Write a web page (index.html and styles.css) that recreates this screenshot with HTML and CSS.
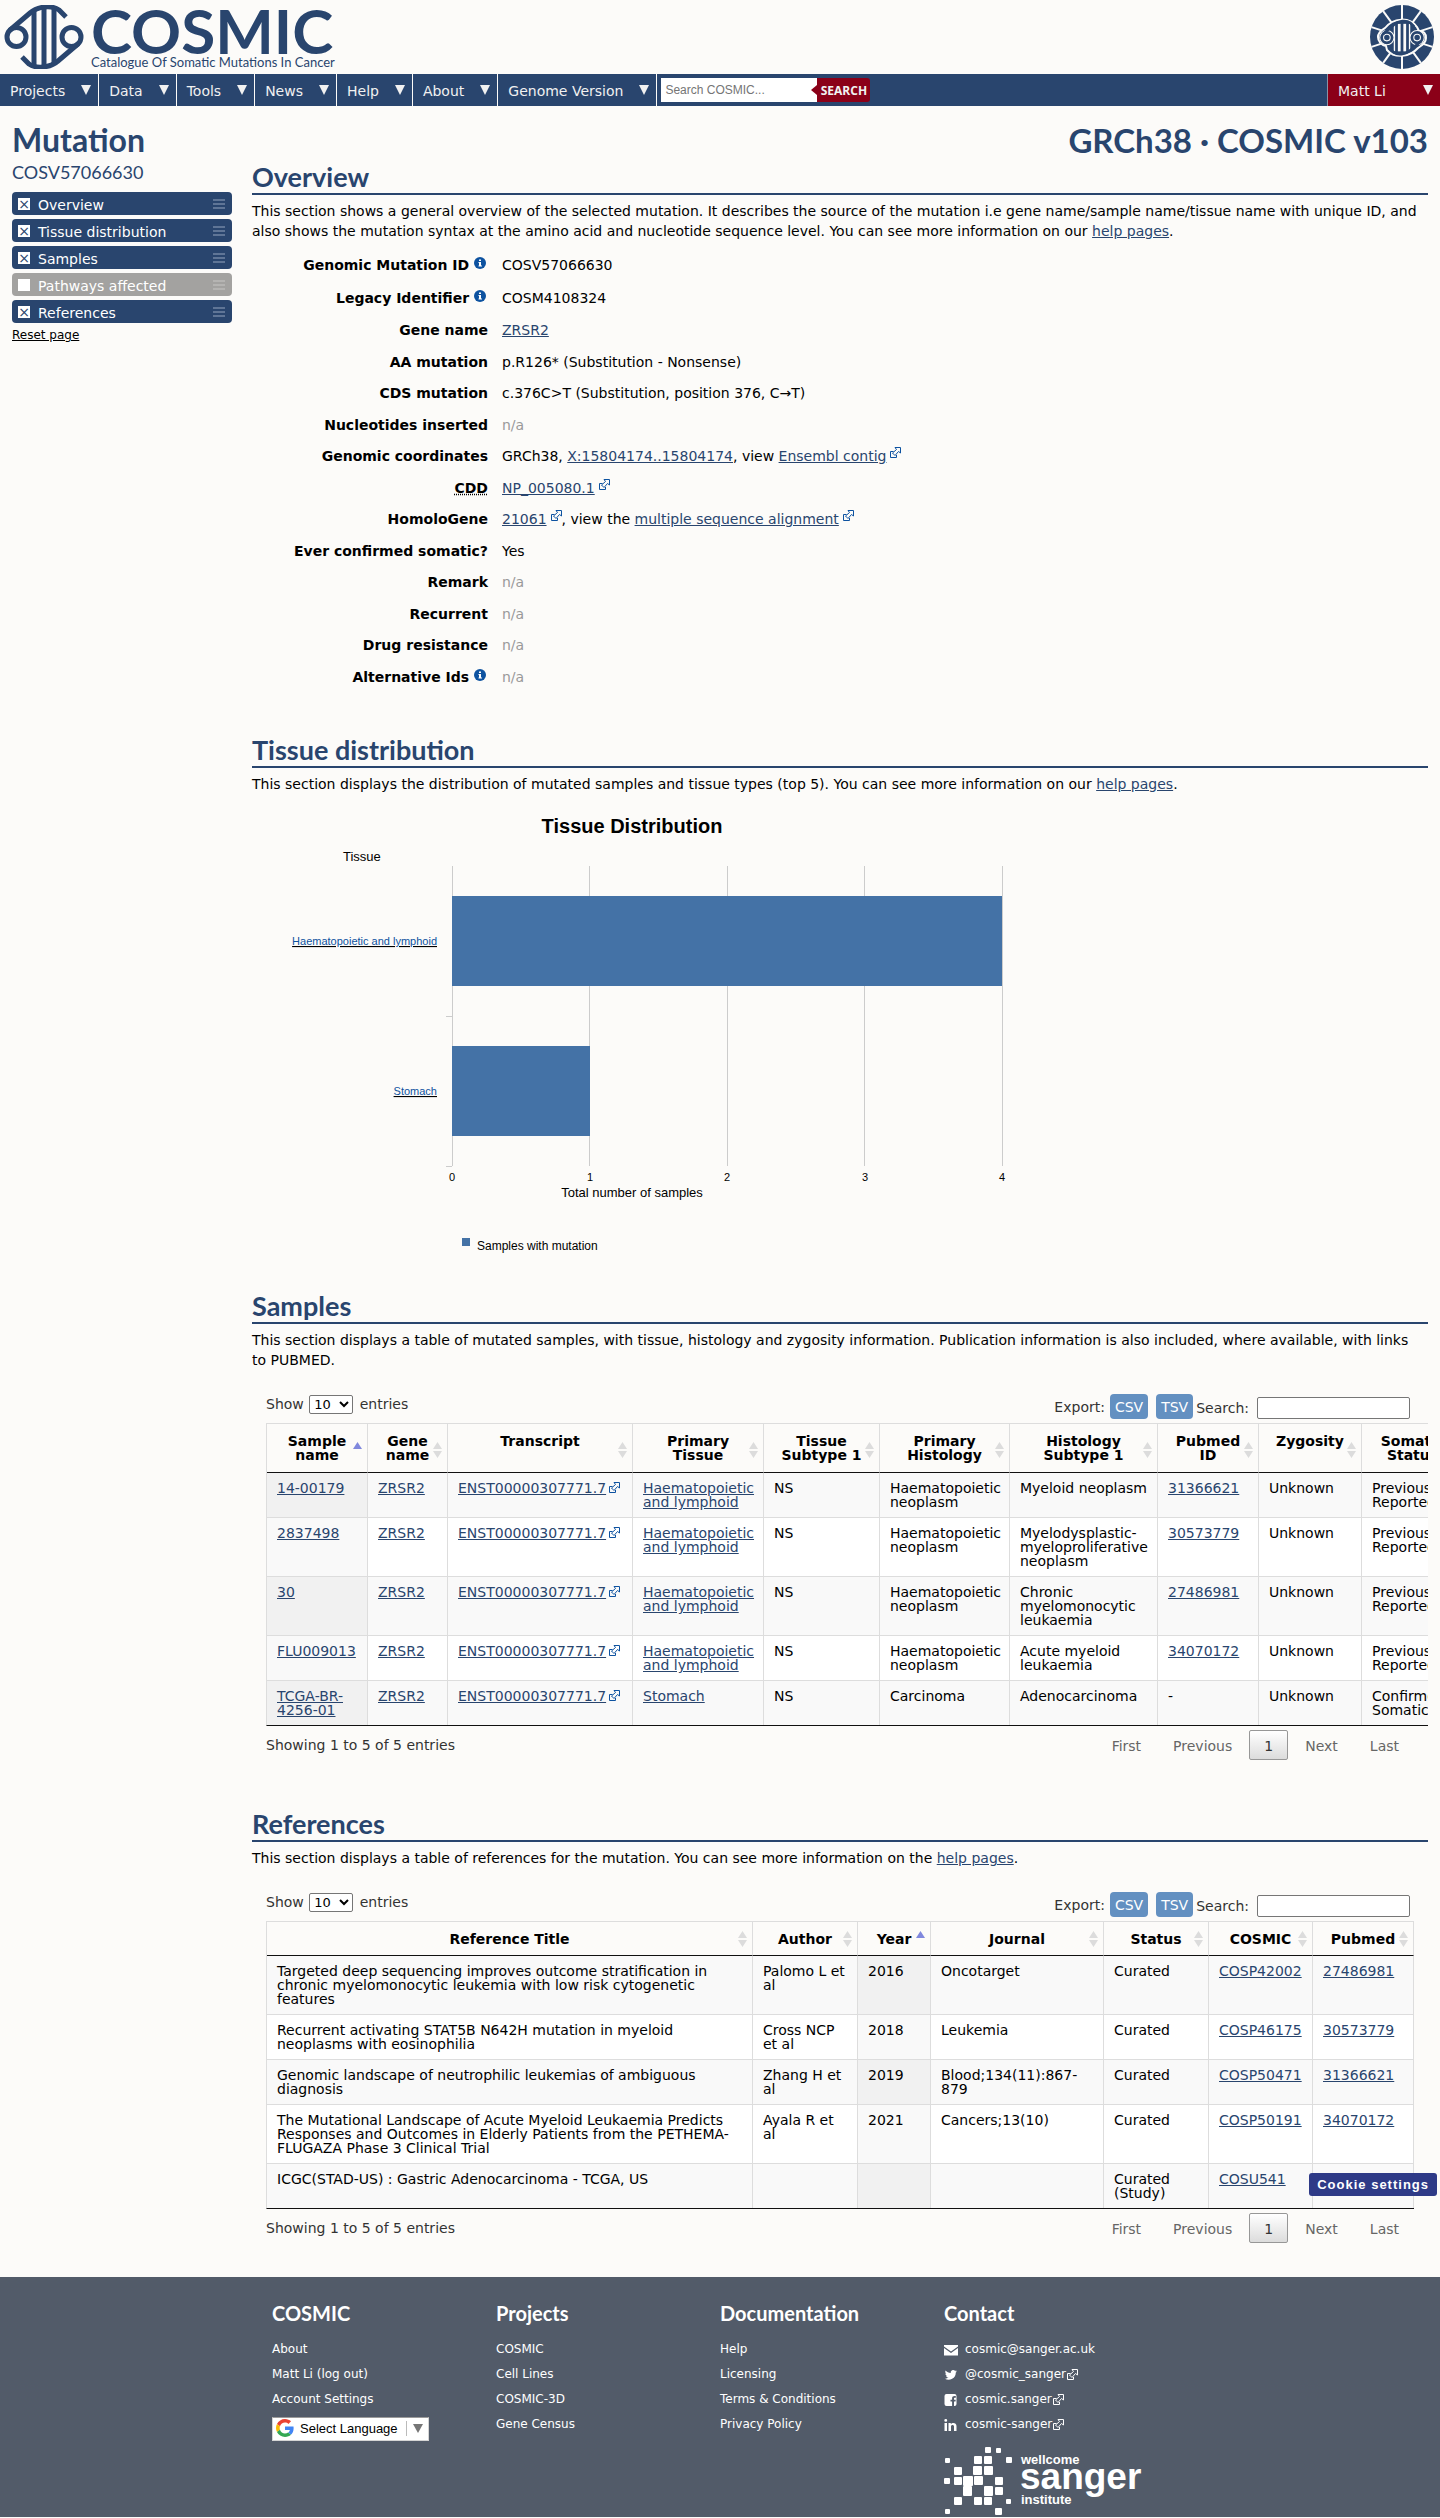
FILE: index.html
```html
<!DOCTYPE html>
<html lang="en">
<head>
<meta charset="utf-8">
<title>Mutation COSV57066630 - COSMIC</title>
<meta name="viewport" content="width=device-width, initial-scale=1">
<link rel="stylesheet" href="styles.css">
</head>
<body>
<svg width="0" height="0" class="defs" aria-hidden="true">
  <defs>
    <g id="glyph" fill="none" stroke="#29456e" stroke-width="5">
      <circle cx="12.500" cy="32" r="9.500"/>
      <circle cx="67.500" cy="32" r="9.500"/>
      <path d="M5.500 25.500 26 8C34 1 48 0 55 5l7 7"/>
      <path d="M74.500 38.500 54 56C46 63 32 64 25 59l-7-7"/>
      <path d="M30 5v55M40 2v60M50 4v55"/>
    </g>
    <g id="ext" fill="none" stroke="currentColor">
      <path d="M3.500 4.500h-3v6h6V8"/>
      <path d="M5 .5h5.500V6L8.500 4.500l-3.500 4-2.500-2.500 4-3.500z"/>
    </g>
    <g id="sort"><path d="M4.500 0 9 7H0zM0 9h9l-4.500 7z" fill="#dcdcdc"/></g>
    <g id="asc"><path d="M4.500 0 9 7H0z" fill="#8088dd"/></g>
    <g id="info"><circle cx="6" cy="6" r="6" fill="#0d52a0"/><path d="M5 2.500h2v1.500H5zM4.500 5H7v3.500h1v1H4.500v-1H5V6h-.5z" fill="#fff"/></g>
  </defs>
</svg>

<header class="masthead">
  <a class="brand" href="#" aria-label="COSMIC home">
    <svg class="brand-mark" viewBox="0 0 80 64" aria-hidden="true"><use href="#glyph"/></svg>
    <span class="brand-words"><span class="brand-name">COSMIC</span><span class="brand-tag">Catalogue Of Somatic Mutations In Cancer</span></span>
  </a>
  <svg class="seal" viewBox="0 0 64 64" aria-hidden="true">
    <circle cx="32" cy="32" r="32" fill="#29456e"/>
    <g stroke="#fcfbf9" stroke-width="2"><path id="spoke" d="M32 0v64"/><use href="#spoke" transform="rotate(36 32 32)"/><use href="#spoke" transform="rotate(72 32 32)"/><use href="#spoke" transform="rotate(108 32 32)"/><use href="#spoke" transform="rotate(144 32 32)"/></g>
    <path d="M8 32c0-5 4-7 7-9 8-10 24-12 32-1l2 4c5 0 7 3 7 7 0 5-4 7-8 10-8 9-23 11-31 2l-1-4c-5-1-8-5-8-9z" fill="#29456e" stroke="#fcfbf9" stroke-width="2"/>
    <g transform="translate(10 15) scale(.55)"><path d="M25 7h30v50H25z" fill="#fcfbf9"/><circle cx="12.500" cy="32" r="9.500" fill="none" stroke="#fcfbf9" stroke-width="9"/><circle cx="67.500" cy="32" r="9.500" fill="none" stroke="#fcfbf9" stroke-width="9"/><use href="#glyph"/></g>
  </svg>
</header>

<nav class="navbar" aria-label="Main">
  <a href="#">Projects<i></i></a><a href="#">Data<i></i></a><a href="#">Tools<i></i></a><a href="#">News<i></i></a><a href="#">Help<i></i></a><a href="#">About<i></i></a><a href="#">Genome Version<i></i></a>
  <form class="site-search"><input type="text" placeholder="Search COSMIC..." aria-label="Search COSMIC"><button type="button">SEARCH</button></form>
  <a class="account" href="#">Matt Li<i></i></a>
</nav>

<div class="page">
  <aside class="sidebar">
    <h1>Mutation</h1>
    <p class="mutation-id">COSV57066630</p>
    <ul class="toggles">
      <li><label><input type="checkbox" checked><span>Overview</span></label></li>
      <li><label><input type="checkbox" checked><span>Tissue distribution</span></label></li>
      <li><label><input type="checkbox" checked><span>Samples</span></label></li>
      <li class="off"><label><input type="checkbox"><span>Pathways affected</span></label></li>
      <li><label><input type="checkbox" checked><span>References</span></label></li>
    </ul>
    <a class="reset" href="#">Reset page</a>
  </aside>

  <main class="content">
    <p class="release">GRCh38 · COSMIC v103</p>

    <section class="overview">
      <h2>Overview</h2>
      <p class="intro">This section shows a general overview of the selected mutation. It describes the source of the mutation i.e gene name/sample name/tissue name with unique ID, and also shows the mutation syntax at the amino acid and nucleotide sequence level. You can see more information on our <a href="#">help pages</a>.</p>
      <dl>
        <div class="noted"><dt>Genomic Mutation ID <svg class="info" viewBox="0 0 12 12"><use href="#info"/></svg></dt><dd>COSV57066630</dd></div>
        <div class="noted"><dt>Legacy Identifier <svg class="info" viewBox="0 0 12 12"><use href="#info"/></svg></dt><dd>COSM4108324</dd></div>
        <div><dt>Gene name</dt><dd><a href="#">ZRSR2</a></dd></div>
        <div><dt>AA mutation</dt><dd>p.R126* (Substitution - Nonsense)</dd></div>
        <div><dt>CDS mutation</dt><dd>c.376C&gt;T (Substitution, position 376, C→T)</dd></div>
        <div><dt>Nucleotides inserted</dt><dd class="na">n/a</dd></div>
        <div><dt>Genomic coordinates</dt><dd>GRCh38, <a href="#">X:15804174..15804174</a>, view <a href="#">Ensembl contig</a><svg class="ext up" viewBox="0 0 11 11"><use href="#ext"/></svg></dd></div>
        <div><dt><abbr title="Conserved Domain Database">CDD</abbr></dt><dd><a href="#">NP_005080.1</a><svg class="ext up" viewBox="0 0 11 11"><use href="#ext"/></svg></dd></div>
        <div><dt>HomoloGene</dt><dd><a href="#">21061</a><svg class="ext up" viewBox="0 0 11 11"><use href="#ext"/></svg>, view the <a href="#">multiple sequence alignment</a><svg class="ext up" viewBox="0 0 11 11"><use href="#ext"/></svg></dd></div>
        <div><dt>Ever confirmed somatic?</dt><dd>Yes</dd></div>
        <div><dt>Remark</dt><dd class="na">n/a</dd></div>
        <div><dt>Recurrent</dt><dd class="na">n/a</dd></div>
        <div><dt>Drug resistance</dt><dd class="na">n/a</dd></div>
        <div><dt>Alternative Ids <svg class="info" viewBox="0 0 12 12"><use href="#info"/></svg></dt><dd class="na">n/a</dd></div>
      </dl>
    </section>

    <section class="tissue">
      <h2>Tissue distribution</h2>
      <p class="intro">This section displays the distribution of mutated samples and tissue types (top 5). You can see more information on our <a href="#">help pages</a>.</p>
      <svg class="chart" viewBox="1 0 800 460" role="img" aria-label="Tissue distribution">
        <text class="chart-title" x="381" y="37" text-anchor="middle">Tissue Distribution</text>
        <text x="92" y="65">Tissue</text>
        <path class="grid" d="M201.500 70v300M338.500 70v300M476.500 70v300M613.500 70v300M751.500 70v300M195 220.500h6M195 370.500h6"/>
        <rect class="bar" x="201" y="100" width="550" height="90"/>
        <rect class="bar" x="201" y="250" width="138" height="90"/>
        <g class="cat" text-anchor="end">
          <a href="#"><text x="186" y="149">Haematopoietic and lymphoid</text></a>
          <a href="#"><text x="186" y="299">Stomach</text></a>
        </g>
        <g class="ticks" text-anchor="middle"><text x="201" y="385">0</text><text x="339" y="385">1</text><text x="476" y="385">2</text><text x="614" y="385">3</text><text x="751" y="385">4</text></g>
        <text x="381" y="401" text-anchor="middle">Total number of samples</text>
        <rect class="bar" x="211" y="442" width="8" height="8"/>
        <text class="legend" x="226" y="454">Samples with mutation</text>
      </svg>
    </section>

    <section class="samples">
      <h2>Samples</h2>
      <p class="intro">This section displays a table of mutated samples, with tissue, histology and zygosity information. Publication information is also included, where available, with links to PUBMED.</p>
      <div class="grid-wrap">
        <div class="controls">
          <label>Show <select><option>10</option></select> entries</label>
          <div class="tools">Export: <button type="button">CSV</button><button type="button">TSV</button><label>Search: <input type="search"></label></div>
        </div>
        <div class="scroller">
        <table class="samples-table">
          <colgroup><col class="w101"><col class="w80"><col class="w185"><col class="w131"><col class="w116"><col class="w130"><col class="w148"><col class="w101"><col class="w103"><col class="w102"></colgroup>
          <thead><tr>
            <th>Sample name<svg viewBox="0 0 9 16"><use href="#asc"/></svg></th>
            <th>Gene name<svg viewBox="0 0 9 16"><use href="#sort"/></svg></th>
            <th>Transcript<svg viewBox="0 0 9 16"><use href="#sort"/></svg></th>
            <th>Primary Tissue<svg viewBox="0 0 9 16"><use href="#sort"/></svg></th>
            <th>Tissue Subtype 1<svg viewBox="0 0 9 16"><use href="#sort"/></svg></th>
            <th>Primary Histology<svg viewBox="0 0 9 16"><use href="#sort"/></svg></th>
            <th>Histology Subtype 1<svg viewBox="0 0 9 16"><use href="#sort"/></svg></th>
            <th>Pubmed ID<svg viewBox="0 0 9 16"><use href="#sort"/></svg></th>
            <th>Zygosity<svg viewBox="0 0 9 16"><use href="#sort"/></svg></th>
            <th>Somatic Status</th>
          </tr></thead>
          <tbody>
            <tr><td class="sorted"><a href="#">14-00179</a></td><td><a href="#">ZRSR2</a></td><td><a href="#">ENST00000307771.7</a><svg class="ext" viewBox="0 0 11 11"><use href="#ext"/></svg></td><td><a href="#">Haematopoietic and lymphoid</a></td><td>NS</td><td>Haematopoietic neoplasm</td><td>Myeloid neoplasm</td><td><a href="#">31366621</a></td><td>Unknown</td><td>Previously Reported</td></tr>
            <tr><td class="sorted"><a href="#">2837498</a></td><td><a href="#">ZRSR2</a></td><td><a href="#">ENST00000307771.7</a><svg class="ext" viewBox="0 0 11 11"><use href="#ext"/></svg></td><td><a href="#">Haematopoietic and lymphoid</a></td><td>NS</td><td>Haematopoietic neoplasm</td><td>Myelodysplastic-myeloproliferative neoplasm</td><td><a href="#">30573779</a></td><td>Unknown</td><td>Previously Reported</td></tr>
            <tr><td class="sorted"><a href="#">30</a></td><td><a href="#">ZRSR2</a></td><td><a href="#">ENST00000307771.7</a><svg class="ext" viewBox="0 0 11 11"><use href="#ext"/></svg></td><td><a href="#">Haematopoietic and lymphoid</a></td><td>NS</td><td>Haematopoietic neoplasm</td><td>Chronic myelomonocytic leukaemia</td><td><a href="#">27486981</a></td><td>Unknown</td><td>Previously Reported</td></tr>
            <tr><td class="sorted"><a href="#">FLU009013</a></td><td><a href="#">ZRSR2</a></td><td><a href="#">ENST00000307771.7</a><svg class="ext" viewBox="0 0 11 11"><use href="#ext"/></svg></td><td><a href="#">Haematopoietic and lymphoid</a></td><td>NS</td><td>Haematopoietic neoplasm</td><td>Acute myeloid leukaemia</td><td><a href="#">34070172</a></td><td>Unknown</td><td>Previously Reported</td></tr>
            <tr><td class="sorted"><a href="#">TCGA-BR-4256-01</a></td><td><a href="#">ZRSR2</a></td><td><a href="#">ENST00000307771.7</a><svg class="ext" viewBox="0 0 11 11"><use href="#ext"/></svg></td><td><a href="#">Stomach</a></td><td>NS</td><td>Carcinoma</td><td>Adenocarcinoma</td><td>-</td><td>Unknown</td><td>Confirmed Somatic</td></tr>
          </tbody>
        </table>
        </div>
        <div class="pager"><span>Showing 1 to 5 of 5 entries</span><div class="pages"><a href="#">First</a><a href="#">Previous</a><a class="current" href="#">1</a><a href="#">Next</a><a href="#">Last</a></div></div>
      </div>
    </section>

    <section class="references">
      <h2>References</h2>
      <p class="intro">This section displays a table of references for the mutation. You can see more information on the <a href="#">help pages</a>.</p>
      <div class="grid-wrap">
        <div class="controls">
          <label>Show <select><option>10</option></select> entries</label>
          <div class="tools">Export: <button type="button">CSV</button><button type="button">TSV</button><label>Search: <input type="search"></label></div>
        </div>
        <table class="references-table">
          <colgroup><col><col class="w105"><col class="w73"><col class="w173"><col class="w105"><col class="w104"><col class="w101"></colgroup>
          <thead><tr>
            <th>Reference Title<svg viewBox="0 0 9 16"><use href="#sort"/></svg></th>
            <th>Author<svg viewBox="0 0 9 16"><use href="#sort"/></svg></th>
            <th>Year<svg viewBox="0 0 9 16"><use href="#asc"/></svg></th>
            <th>Journal<svg viewBox="0 0 9 16"><use href="#sort"/></svg></th>
            <th>Status<svg viewBox="0 0 9 16"><use href="#sort"/></svg></th>
            <th>COSMIC<svg viewBox="0 0 9 16"><use href="#sort"/></svg></th>
            <th>Pubmed<svg viewBox="0 0 9 16"><use href="#sort"/></svg></th>
          </tr></thead>
          <tbody>
            <tr><td>Targeted deep sequencing improves outcome stratification in chronic myelomonocytic leukemia with low risk cytogenetic features</td><td>Palomo L et al</td><td class="sorted">2016</td><td>Oncotarget</td><td>Curated</td><td><a href="#">COSP42002</a></td><td><a href="#">27486981</a></td></tr>
            <tr><td>Recurrent activating STAT5B N642H mutation in myeloid neoplasms with eosinophilia</td><td>Cross NCP et al</td><td class="sorted">2018</td><td>Leukemia</td><td>Curated</td><td><a href="#">COSP46175</a></td><td><a href="#">30573779</a></td></tr>
            <tr><td>Genomic landscape of neutrophilic leukemias of ambiguous diagnosis</td><td>Zhang H et al</td><td class="sorted">2019</td><td>Blood;134(11):867-879</td><td>Curated</td><td><a href="#">COSP50471</a></td><td><a href="#">31366621</a></td></tr>
            <tr><td>The Mutational Landscape of Acute Myeloid Leukaemia Predicts Responses and Outcomes in Elderly Patients from the PETHEMA-FLUGAZA Phase 3 Clinical Trial</td><td>Ayala R et al</td><td class="sorted">2021</td><td>Cancers;13(10)</td><td>Curated</td><td><a href="#">COSP50191</a></td><td><a href="#">34070172</a></td></tr>
            <tr><td>ICGC(STAD-US) : Gastric Adenocarcinoma - TCGA, US</td><td></td><td class="sorted"></td><td></td><td>Curated (Study)</td><td><a href="#">COSU541</a></td><td></td></tr>
          </tbody>
        </table>
        <div class="pager"><span>Showing 1 to 5 of 5 entries</span><div class="pages"><a href="#">First</a><a href="#">Previous</a><a class="current" href="#">1</a><a href="#">Next</a><a href="#">Last</a></div></div>
      </div>
    </section>
  </main>
  <button class="cookies" type="button">Cookie settings</button>
</div>

<footer class="footer">
  <div><h3>COSMIC</h3><ul><li><a href="#">About</a></li><li><a href="#">Matt Li (log out)</a></li><li><a href="#">Account Settings</a></li></ul>
    <a class="translate" href="#">
      <svg viewBox="0 0 48 48" aria-hidden="true"><path fill="#ea4335" d="M24 9.500c3.540 0 6.710 1.220 9.210 3.600l6.850-6.850C35.900 2.380 30.470 0 24 0 14.620 0 6.510 5.380 2.560 13.220l7.980 6.190C12.430 13.720 17.740 9.500 24 9.500z"/><path fill="#4285f4" d="M46.980 24.550c0-1.570-.15-3.090-.38-4.550H24v9.020h12.940c-.58 2.960-2.260 5.480-4.780 7.180l7.730 6c4.510-4.180 7.090-10.360 7.090-17.650z"/><path fill="#fbbc05" d="M10.530 28.590c-.48-1.450-.76-2.990-.76-4.590s.27-3.140.76-4.590l-7.980-6.190C.92 16.460 0 20.120 0 24s.92 7.540 2.560 10.780l7.970-6.190z"/><path fill="#34a853" d="M24 48c6.480 0 11.930-2.130 15.890-5.810l-7.730-6c-2.150 1.450-4.920 2.300-8.160 2.300-6.260 0-11.570-4.220-13.470-9.910l-7.980 6.190C6.510 42.620 14.620 48 24 48z"/></svg>
      <span>Select Language</span><b></b>
    </a>
  </div>
  <div><h3>Projects</h3><ul><li><a href="#">COSMIC</a></li><li><a href="#">Cell Lines</a></li><li><a href="#">COSMIC-3D</a></li><li><a href="#">Gene Census</a></li></ul></div>
  <div><h3>Documentation</h3><ul><li><a href="#">Help</a></li><li><a href="#">Licensing</a></li><li><a href="#">Terms &amp; Conditions</a></li><li><a href="#">Privacy Policy</a></li></ul></div>
  <div><h3>Contact</h3>
    <ul class="social">
      <li><svg class="soc" viewBox="0 0 14 14"><path d="M0 3.500V2h14v1.500L7 8.500zM0 5l7 5 7-5v7.500H0z" fill="#fff"/></svg><a href="#">cosmic@sanger.ac.uk</a></li>
      <li><svg class="soc" viewBox="0 0 14 14"><path d="M13 3.200c-.5.200-1 .400-1.500.400.500-.3.900-.8 1.100-1.400-.5.300-1 .500-1.600.600A2.500 2.500 0 0 0 6.700 5C4.700 4.900 2.900 3.900 1.600 2.400.9 3.600 1.300 5 2.400 5.700c-.4 0-.8-.1-1.100-.3 0 1.200.8 2.200 2 2.500-.4.100-.7.100-1.100 0 .3 1 1.200 1.700 2.300 1.700A5 5 0 0 1 .8 10.700 7.200 7.200 0 0 0 11.800 4.500c.5-.4.900-.8 1.200-1.300z" fill="#fff"/></svg><a href="#">@cosmic_sanger</a><svg class="ext" viewBox="0 0 11 11"><use href="#ext"/></svg></li>
      <li><svg class="soc" viewBox="0 0 14 14"><path d="M2.500 1h8A2 2 0 0 1 12.500 3v8a2 2 0 0 1-2 2H10V8.500h1.500l.2-1.800H10V5.600c0-.5.200-.9.900-.9h.9V3.100c-2.400-.4-3.700.4-3.700 2.200v1.400H6.500v1.800h1.600V13H2.500a2 2 0 0 1-2-2V3a2 2 0 0 1 2-2z" fill="#fff"/></svg><a href="#">cosmic.sanger</a><svg class="ext" viewBox="0 0 11 11"><use href="#ext"/></svg></li>
      <li><svg class="soc" viewBox="0 0 14 14"><path d="M.5 5H3v8H.5zM4.500 5h2.300v1.100C8 4.300 12.500 4.200 12.500 8v5H10V8.600C10 6.500 7 6.600 7 8.600V13H4.500zM.3 2.400a1.400 1.400 0 1 1 2.900 0 1.400 1.400 0 0 1-2.900 0z" fill="#fff"/></svg><a href="#">cosmic-sanger</a><svg class="ext" viewBox="0 0 11 11"><use href="#ext"/></svg></li>
    </ul>
    <svg class="sanger" viewBox="0 0 202 70" role="img" aria-label="Wellcome Sanger Institute">
      <g fill="#fff">
        <rect x="41" y="1" width="6" height="6" rx="1"/><rect x="52" y="2" width="5" height="5" rx="1"/>
        <rect x="1" y="12" width="5" height="5" rx="1"/><rect x="30" y="10" width="8" height="8" rx="1"/><rect x="40" y="10" width="8" height="8" rx="1"/><rect x="62" y="11" width="6" height="6" rx="1"/>
        <rect x="10" y="21" width="8" height="8" rx="1"/><rect x="29" y="20" width="9" height="9" rx="1"/><rect x="40" y="20" width="9" height="9" rx="1"/>
        <rect x="0" y="32" width="6" height="6" rx="1"/><rect x="10" y="31" width="8" height="8" rx="1"/><rect x="19" y="30" width="10" height="10" rx="1"/><rect x="30" y="30" width="9" height="9" rx="1"/><rect x="51" y="31" width="8" height="8" rx="1"/>
        <rect x="19" y="40" width="9" height="10" rx="1"/><rect x="40" y="40" width="9" height="10" rx="1"/><rect x="51" y="41" width="8" height="8" rx="1"/>
        <rect x="10" y="51" width="8" height="8" rx="1"/><rect x="30" y="51" width="8" height="8" rx="1"/><rect x="40" y="51" width="8" height="8" rx="1"/><rect x="62" y="53" width="5" height="5" rx="1"/>
        <rect x="1" y="63" width="5" height="5" rx="1"/><rect x="51" y="62" width="7" height="7" rx="1"/>
        <text class="s-small" x="77" y="18">wellcome</text><text class="s-big" x="76" y="43">sanger</text><text class="s-small" x="77" y="58">institute</text>
      </g>
    </svg>
  </div>
</footer>
</body>
</html>
```
FILE: styles.css
```css
* { box-sizing: border-box; }
body { margin: 0; background: #fcfbf9; color: #000; font: 14px/20px "DejaVu Sans", Verdana, sans-serif; }
a { color: #29456e; }
h1, h2, h3, p, ul, dl, dd { margin: 0; padding: 0; }
ul { list-style: none; }
.defs { position: absolute; }

.masthead { display: flex; justify-content: space-between; align-items: flex-start; height: 74px; padding: 5px 6px 0 4px; }
.brand { display: flex; gap: 7px; color: #29456e; text-decoration: none; font-family: Lato, sans-serif; }
.brand-mark { width: 80px; height: 64px; }
.brand-words { display: flex; flex-direction: column; }
.brand-name { font-size: 62px; line-height: 50px; font-weight: 700; }
.brand-tag { font-size: 13px; line-height: 14px; }
.seal { width: 64px; height: 64px; }

.navbar { display: flex; height: 32px; background: #29456e; }
.navbar > a { display: flex; align-items: center; gap: 16px; padding: 2px 7px 0 10px; border-right: 1px solid #fcfbf9; color: #f1f1f1; text-decoration: none; }
.navbar i { border: 5px solid transparent; border-top: 10px solid #f1f1f1; border-bottom: 0; margin-top: -3px; }
.navbar > .account { justify-content: space-between; width: 113px; margin-left: auto; background: #8b0018; border-right: 0; border-left: 1px solid #8c93a4; }
.site-search { display: flex; padding: 4px; }
.site-search input { width: 156px; height: 24px; border: 0; padding: 0 4px; font: 12px "Liberation Sans", Arial, sans-serif; }
.site-search button { position: relative; width: 53px; height: 24px; border: 0; border-radius: 0 3px 3px 0; padding: 0; background: #8b0018; color: #f1f1f1; font: 700 12px "Open Sans", sans-serif; }
.site-search button::before { content: ""; position: absolute; left: -6px; top: 7px; border: 5px solid transparent; border-right: 6px solid #8b0018; border-left: 0; }

.page { position: relative; display: flex; padding: 0 12px; }
.sidebar { width: 220px; margin-right: 20px; flex: none; color: #29456e; }
h1, h2, h3, .release, .mutation-id { font-family: Lato, sans-serif; font-weight: 700; color: #29456e; }
h1 { font-size: 32px; line-height: 40px; padding-top: 14px; }
.mutation-id { font-size: 18px; font-weight: 400; line-height: 20px; padding: 2px 0 10px; }
.toggles { display: grid; gap: 4px; }
.toggles label { display: flex; align-items: center; gap: 8px; height: 23px; padding: 0 7px 0 6px; border-radius: 4px; background: #29456e; color: #fff; }
.toggles span { padding-top: 2px; }
.toggles label::after { content: ""; width: 12px; height: 10px; margin-left: auto; background: repeating-linear-gradient(#5f7596 0 2px, transparent 2px 4px); }
.toggles .off label { background: #a3a2a0; }
.toggles .off label::after { background: repeating-linear-gradient(#b5b4b2 0 2px, transparent 2px 4px); }
.toggles input { appearance: none; display: grid; place-items: center; width: 12px; height: 12px; margin: 0; background: #fff; }
.toggles input:checked::before { content: "×"; font: 14px/12px "DejaVu Sans", sans-serif; color: #29456e; }
.reset { font-size: 12px; line-height: 24px; color: #000; display: block; }

.content { flex: 1; min-width: 0; padding: 0 0 30px; }
.release { font-size: 33px; line-height: 40px; text-align: right; padding-top: 14px; }
h2 { font-size: 27px; line-height: 32px; border-bottom: 2px solid #29456e; margin-bottom: 6px; }
.intro { padding-right: 10px; }
.content section { padding-top: 1px; }
.tissue { margin-top: 41px; }
.samples { margin-top: 33px; }
.references { margin-top: 43px; }

dl { padding-top: 8px; }
dl div { display: grid; grid-template-columns: 236px 1fr; column-gap: 14px; align-items: center; height: 31px; }
dl div:nth-child(odd) { height: 32px; }
dl .noted { height: 33px; }
dt { font-weight: 700; text-align: right; }
.na { color: #999; }
abbr { text-decoration: underline dotted; }
.info { width: 12px; height: 12px; margin-right: 2px; vertical-align: 1px; }
.ext { width: 11px; height: 11px; margin-left: 3px; color: #0d52a0; vertical-align: 0; }
.ext.up { vertical-align: 3px; margin-left: 4px; }

.chart { display: block; width: 800px; max-width: 100%; margin-top: 2px; font: 13px "Liberation Sans", Arial, sans-serif; }
.chart-title { font-size: 20px; font-weight: 700; }
.legend { font-size: 12px; }
.grid { stroke: #ccc; fill: none; }
.bar { fill: #4472a6; }
.cat, .ticks { font-size: 11px; }
.cat a { text-decoration: underline; fill: #000; }
.cat text { fill: #0d52a0; }

.grid-wrap { padding: 20px 14px 0; }
.controls { display: flex; justify-content: space-between; align-items: flex-start; height: 33px; padding: 4px 4px 0 0; color: #333; }
.controls select { width: 44px; height: 19px; padding: 0; margin: 0 2px 0 1px; border: 1px solid #767676; border-radius: 2px; background: #fff; font: 13px "DejaVu Sans", sans-serif; }
.tools { display: flex; align-items: center; height: 25px; }
.tools button { height: 25px; margin: 0 8px 0 5px; padding: 0 5px; border: 0; border-radius: 4px; background: #6390c1; color: #fff; font: 14px "DejaVu Sans", sans-serif; }
.tools button + button { margin: 0 3px 0 0; }
.tools label { display: flex; align-items: center; gap: 8px; padding-top: 3px; }
.tools input { appearance: none; width: 153px; height: 22px; border: 1px solid #767676; border-radius: 2px; background: #fff; }
.scroller { overflow: hidden; margin-right: -14px; }

table { table-layout: fixed; width: 100%; border-collapse: separate; border-spacing: 0; border-top: 1px solid #ddd; border-left: 1px solid #ddd; border-bottom: 1px solid #111; line-height: 14px; }
.samples-table { width: 1198px; }
th { position: relative; padding: 10px 16px; border-right: 1px solid #ddd; border-bottom: 1px solid #111; vertical-align: top; }
th svg { position: absolute; right: 5px; top: calc(50% - 6px); width: 9px; height: 16px; }
td { padding: 8px 6px 8px 10px; border-right: 1px solid #ddd; vertical-align: top; background: #fff; }
.references-table td { padding-right: 10px; }
tr + tr td { border-top: 1px solid #ddd; }
tbody tr:nth-child(odd) td { background: #f9f9f9; }
tbody tr:nth-child(odd) .sorted { background: #f1f1f1; }
tbody tr:nth-child(even) .sorted { background: #f9f9f9; }
.references-table th { padding-bottom: 9px; }
.references-table th svg { top: calc(50% - 8px); }
.w73 { width: 73px; } .w80 { width: 80px; } .w101 { width: 101px; } .w102 { width: 102px; } .w103 { width: 103px; } .w104 { width: 104px; } .w105 { width: 105px; }
.w116 { width: 116px; } .w130 { width: 130px; } .w131 { width: 131px; } .w148 { width: 148px; } .w173 { width: 173px; } .w185 { width: 185px; }

.pager { display: flex; justify-content: space-between; align-items: center; height: 38px; color: #333; }
.pages { display: flex; gap: 2px; }
.pages a { padding: 5px 14px 3px; color: #666; text-decoration: none; line-height: 20px; border: 1px solid transparent; border-radius: 2px; }
.pages .current { border-color: #979797; background: linear-gradient(#fff, #dcdcdc); color: #333; }

.cookies { position: absolute; right: 3px; bottom: 81px; height: 23px; padding: 0 8px; border: 0; border-radius: 3px; background: #2e3a87; color: #fff; font: 700 13px "Liberation Sans", Arial, sans-serif; letter-spacing: 1px; }

.footer { display: grid; grid-template-columns: repeat(4, 224px); padding: 26px 0 1px 272px; background: #525b69; font-size: 12px; line-height: 25px; color: #fff; }
.footer h3 { font-size: 20px; line-height: 20px; color: #fff; padding-bottom: 14px; }
.footer li a { color: #fff; text-decoration: none; }
.footer .ext { color: #fff; margin-left: 1px; }
.social li { display: flex; align-items: center; }
.soc { width: 14px; height: 14px; margin-right: 7px; }
.translate { display: flex; align-items: center; width: 157px; height: 24px; margin-top: 5px; padding: 0 5px 2px 3px; border: 1px solid #d5d5d5; border-top-color: #9b9b9b; background: #fff; color: #000; text-decoration: none; font: 13px "Liberation Sans", Arial, sans-serif; }
.translate svg { width: 18px; height: 18px; margin-right: 6px; flex: none; }
.translate span { flex: 1; white-space: nowrap; }
.translate b { display: flex; height: 15px; border-left: 1px solid #bbb; padding: 3px 0 0 6px; }
.translate b::after { content: ""; border: 5px solid transparent; border-top: 9px solid #767676; border-bottom: 0; }
.sanger { display: block; width: 202px; height: 70px; margin-top: 9px; font-family: "Liberation Sans", Arial, sans-serif; }
.s-small { font-size: 13px; font-weight: 700; }
.s-big { font-size: 37px; font-weight: 700; }
```
